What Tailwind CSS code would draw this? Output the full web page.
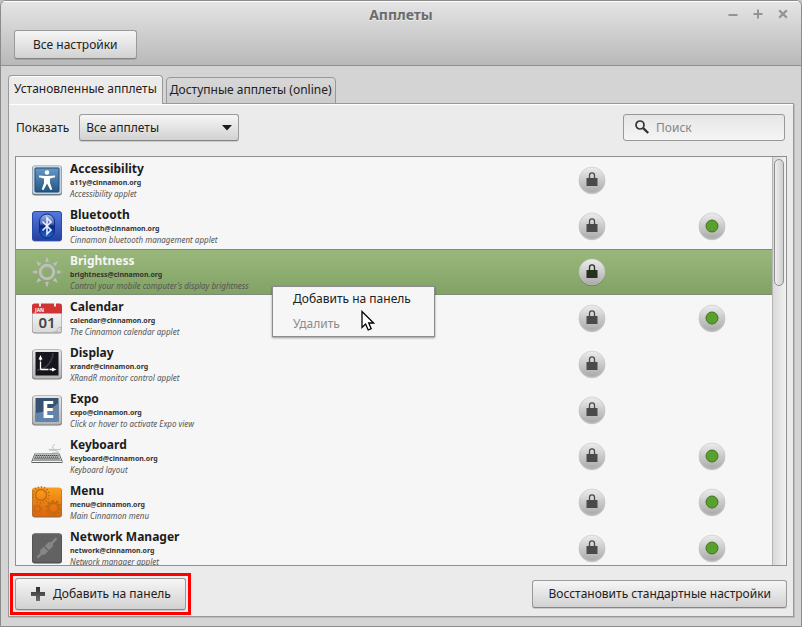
<!DOCTYPE html>
<html lang="ru">
<head>
<meta charset="utf-8">
<meta name="viewport" content="width=device-width, initial-scale=1">
<title>Апплеты</title>
<script src="https://cdn.jsdelivr.net/npm/@tailwindcss/browser@4"></script>
</head>
<body class="bg-[#c3c3c3] font-['Noto_Sans',sans-serif] text-[12px] leading-4 text-[#212121]">

<svg width="0" height="0" class="absolute" aria-hidden="true">
  <defs>
    <linearGradient id="metal" x1="0" y1="0" x2="0" y2="1"><stop offset="0" stop-color="#ededed"/><stop offset="1" stop-color="#a9a9a9"/></linearGradient>
    <linearGradient id="frame" x1="0" y1="0" x2="0" y2="1"><stop offset="0" stop-color="#e6e6e6"/><stop offset="1" stop-color="#b4b4b4"/></linearGradient>
    <linearGradient id="blue" x1="0" y1="0" x2="0" y2="1"><stop offset="0" stop-color="#6798c4"/><stop offset="1" stop-color="#255583"/></linearGradient>
    <linearGradient id="bt" x1="0" y1="0" x2="0" y2="1"><stop offset="0" stop-color="#5379e0"/><stop offset="1" stop-color="#2340a0"/></linearGradient>
    <linearGradient id="btOval" x1="0" y1="0" x2="0" y2="1"><stop offset="0" stop-color="#a5b6e6"/><stop offset=".4" stop-color="#4e6cbf"/><stop offset=".5" stop-color="#0b267f"/><stop offset="1" stop-color="#1c6fd8"/></linearGradient>
    <linearGradient id="orange" x1="0" y1="0" x2="0" y2="1"><stop offset="0" stop-color="#faa01c"/><stop offset="1" stop-color="#e0620e"/></linearGradient>
    <linearGradient id="plusFill" x1="0" y1="0" x2="0" y2="1"><stop offset="0" stop-color="#2e2e2e"/><stop offset="1" stop-color="#6f6f6f"/></linearGradient>
    <linearGradient id="paper" x1="0" y1="0" x2="0" y2="1"><stop offset="0" stop-color="#ffffff"/><stop offset="1" stop-color="#d9d9d9"/></linearGradient>
  </defs>
  <symbol id="disc" viewBox="0 0 28 29">
    <circle cx="14" cy="15" r="13.2" fill="#000" opacity=".2"/>
    <circle cx="14" cy="14" r="13" fill="url(#metal)" stroke="#c4c4c4" stroke-width=".6"/>
  </symbol>
  <symbol id="lock" viewBox="0 0 28 29">
    <use href="#disc"/>
    <path d="M11.500 13V9.300a2.500 2.500 0 0 1 5 0V13" fill="none" stroke="currentColor" stroke-width="1.300"/>
    <path d="M8.500 12h11v8h-11z" fill="currentColor"/>
  </symbol>
  <symbol id="active" viewBox="0 0 28 29">
    <use href="#disc"/>
    <circle cx="14" cy="14" r="6" fill="#5aa02c" stroke="#417420" stroke-width="1"/>
  </symbol>
</svg>

<div class="relative flex h-screen flex-col overflow-hidden rounded-t-[6px] border border-[#8b8b8b] bg-[#d4d4d4]">

  <header class="border-b border-[#8f8f8f] bg-linear-to-b from-[#e5e5e5] to-[#b9b9b9] shadow-[inset_0_1px_0_#fff]">
    <div class="grid h-[29px] grid-cols-[1fr_auto_1fr] items-center">
      <h1 class="col-start-2 pb-[2px] text-[14px] font-bold text-[#6c6c6c] [text-shadow:0_1px_0_#eee]">Апплеты</h1>
      <div class="flex justify-end gap-2 pr-[10px] pb-1 text-[#949494]">
        <button aria-label="Свернуть" class="flex h-[17px] w-[17px] items-center justify-center"><svg width="10" height="10" viewBox="0 0 10 10" stroke="currentColor" stroke-width="2"><path d="M.5 6h9"/></svg></button>
        <button aria-label="Развернуть" class="flex h-[17px] w-[17px] items-center justify-center"><svg width="10" height="10" viewBox="0 0 10 10" stroke="currentColor" stroke-width="2"><path d="M.5 5h9M5 .5v9"/></svg></button>
        <button aria-label="Закрыть" class="flex h-[17px] w-[17px] items-center justify-center"><svg width="10" height="10" viewBox="0 0 10 10" stroke="currentColor" stroke-width="2.300"><path d="M1.200 1.200l7.600 7.600M8.800 1.200l-7.600 7.600"/></svg></button>
      </div>
    </div>
    <div class="px-[13px] pb-[6px]">
      <button class="h-[29px] rounded-[3px] border border-[#9a9a9a] border-b-[#858585] bg-linear-to-b from-[#f6f6f6] to-[#d2d2d2] px-[18px] shadow-[0_1px_0_#0002]">Все настройки</button>
    </div>
  </header>

  <main class="flex min-h-0 flex-1 flex-col pt-[9px] pr-[7px] pb-[9px] pl-[7px]">
    <div role="tablist" class="relative z-10 -mb-px flex items-end gap-[3px]">
      <button role="tab" aria-selected="true" class="h-[29px] rounded-t-[4px] border border-b-0 border-[#999] bg-[#ebebeb] px-[5px] pb-[2px] shadow-[inset_0_1px_0_#fff]">Установленные апплеты</button>
      <button role="tab" aria-selected="false" class="h-[27px] rounded-t-[4px] border border-[#999] bg-linear-to-b from-[#d8d8d8] to-[#cbcbcb] px-[3px] pb-[2px]">Доступные апплеты (online)</button>
    </div>

    <section role="tabpanel" aria-label="Установленные апплеты" class="flex min-h-0 flex-1 flex-col border border-[#999] bg-[#ebebeb] px-[6px] pt-[10px] pb-[6px] shadow-[inset_0_1px_0_#fff,1px_1px_0_#bbb]">
      <div class="flex items-center pr-[2px] pl-px">
        <label for="filter" class="mr-[10px]">Показать</label>
        <div class="relative">
          <select id="filter" class="block h-[27px] w-[160px] appearance-none rounded-[3px] border border-[#9a9a9a] border-b-[#858585] bg-linear-to-b from-[#f6f6f6] to-[#d2d2d2] px-[6px] shadow-[0_1px_0_#0002]">
            <option>Все апплеты</option>
          </select>
          <svg class="pointer-events-none absolute top-[11px] right-[7px]" width="10" height="6" viewBox="0 0 10 6"><path d="M0 0h10L5 5.500z" fill="#1c1c1c"/></svg>
        </div>
        <div class="relative ml-auto">
          <svg class="pointer-events-none absolute top-[6px] left-[12px]" width="15" height="15" viewBox="0 0 15 15" fill="none" stroke="#333"><circle cx="5" cy="5" r="4" stroke-width="1.700"/><path d="M8.200 8.200l5 4.800" stroke-width="2.300"/></svg>
          <input type="search" aria-label="Поиск" placeholder="Поиск" class="block h-[27px] w-[162px] rounded-[3px] border border-[#979797] bg-linear-to-b from-[#e6e6e6] to-[#f5f5f5] pr-2 pl-[32px] placeholder:text-[#858585]">
        </div>
      </div>

      <div class="mt-[15px] flex min-h-0 flex-1 border border-[#8f8f8f] bg-[#f6f6f6]">
        <div class="min-w-0 flex-1 overflow-hidden">
          <table class="w-full table-fixed border-collapse">
            <colgroup><col><col class="w-[120px]"><col class="w-[120px]"></colgroup>
            <tbody>
              <tr class="h-[46px] text-[#4a4a4a]">
                <td class="p-0"><div class="flex items-center gap-[7px] pl-[15px]">
                  <svg class="shrink-0" width="32" height="32" viewBox="0 0 32 32"><rect x="1" y="1.500" width="30" height="30" rx="3" fill="#6e7c88"/><rect x="1.500" y="1.500" width="29" height="28.500" rx="2.500" fill="#c6d2dc"/><rect x="4" y="4" width="24" height="24" rx="1" fill="url(#blue)" stroke="#1d4b7a"/><circle cx="16" cy="8.500" r="2.300" fill="#fff"/><path d="M8 11.500l6 .5h4l6-.5v1.800l-5 1.300v4.400l2.300 6.500-1.900.4L16 19.500l-3.400 6.400-1.900-.4L13 19v-4.400l-5-1.300z" fill="#fff"/></svg>
                  <div><div class="font-bold text-[#1c1c1c]">Accessibility</div><div class="text-[7px] leading-3 font-bold text-[#333]">a11y@cinnamon.org</div><div class="text-[8px] leading-[10px] text-[#555] italic">Accessibility applet</div></div>
                </div></td>
                <td class="p-0"><svg class="mx-auto block" width="28" height="29"><use href="#lock"/></svg></td><td></td>
              </tr>
              <tr class="h-[46px] text-[#4a4a4a]">
                <td class="p-0"><div class="flex items-center gap-[7px] pl-[15px]">
                  <svg class="shrink-0" width="32" height="32" viewBox="0 0 32 32"><rect x="1" y="2" width="30" height="29.500" rx="3" fill="#777"/><rect x="1.500" y="1.500" width="29" height="29" rx="2.500" fill="url(#bt)" stroke="#2b4aa8"/><rect x="8.500" y="4" width="15" height="24" rx="7.500" fill="url(#btOval)" stroke="#10277c"/><path d="M11.500 11.500l8.500 8.500-4 4v-16l4 4-8.500 8.500" fill="none" stroke="#e8eefc" stroke-width="1.600"/></svg>
                  <div><div class="font-bold text-[#1c1c1c]">Bluetooth</div><div class="text-[7px] leading-3 font-bold text-[#333]">bluetooth@cinnamon.org</div><div class="text-[8px] leading-[10px] text-[#555] italic">Cinnamon bluetooth management applet</div></div>
                </div></td>
                <td class="p-0"><svg class="mx-auto block" width="28" height="29"><use href="#lock"/></svg></td><td class="p-0"><svg class="mx-auto block" width="28" height="29"><use href="#active"/></svg></td>
              </tr>
              <tr aria-selected="true" class="h-[46px] bg-linear-to-b from-[#9ab87c] to-[#82a164] text-[#27301e] shadow-[inset_0_1px_0_#7f8c78,inset_0_-1px_0_#7f8c78]">
                <td class="p-0"><div class="flex items-center gap-[7px] pl-[15px]">
                  <svg class="shrink-0" width="32" height="32" viewBox="0 0 32 32" fill="#bebebe"><circle cx="16" cy="16" r="6.800" fill="none" stroke="#bebebe" stroke-width="3"/><g id="rays"><path id="ray" d="M14 6l2-5.500L18 6z"/><use href="#ray" transform="rotate(45 16 16)"/><use href="#ray" transform="rotate(90 16 16)"/><use href="#ray" transform="rotate(135 16 16)"/></g><use href="#rays" transform="rotate(180 16 16)"/></svg>
                  <div><div class="font-bold text-[#f5f5f5]">Brightness</div><div class="text-[7px] leading-3 font-bold text-[#333]">brightness@cinnamon.org</div><div class="text-[8px] leading-[10px] text-[#555] italic">Control your mobile computer's display brightness</div></div>
                </div></td>
                <td class="p-0"><svg class="mx-auto block" width="28" height="29"><use href="#lock"/></svg></td><td></td>
              </tr>
              <tr class="h-[46px] text-[#4a4a4a]">
                <td class="p-0"><div class="flex items-center gap-[7px] pl-[15px]">
                  <svg class="shrink-0" width="32" height="32" viewBox="0 0 32 32"><rect x="1" y="2" width="30" height="29.500" rx="3" fill="#8b8b8b"/><rect x="1.500" y="2" width="29" height="28.500" rx="2.500" fill="url(#paper)"/><path d="M1 11.500V4a2.500 2.500 0 0 1 2.500-2.500h25A2.500 2.500 0 0 1 31 4v7.500z" fill="#d13434"/><path d="M9 1v3.500M24 1v3.500" stroke="#eee" stroke-width="2"/><path d="M30 25c-.5 3.500-3 5-8 5.500 4-1 5-3 5-4.500z" stroke="#aaa" stroke-width=".8" fill="#eee"/><text x="4" y="10" font-size="5" font-weight="700" fill="#fff">JAN</text><text x="16" y="26" text-anchor="middle" font-size="15" font-weight="600" fill="#444">01</text></svg>
                  <div><div class="font-bold text-[#1c1c1c]">Calendar</div><div class="text-[7px] leading-3 font-bold text-[#333]">calendar@cinnamon.org</div><div class="text-[8px] leading-[10px] text-[#555] italic">The Cinnamon calendar applet</div></div>
                </div></td>
                <td class="p-0"><svg class="mx-auto block" width="28" height="29"><use href="#lock"/></svg></td><td class="p-0"><svg class="mx-auto block" width="28" height="29"><use href="#active"/></svg></td>
              </tr>
              <tr class="h-[46px] text-[#4a4a4a]">
                <td class="p-0"><div class="flex items-center gap-[7px] pl-[15px]">
                  <svg class="shrink-0" width="32" height="32" viewBox="0 0 32 32"><rect x="1" y="2" width="30" height="29.500" rx="3" fill="#777"/><rect x="1.500" y="1.500" width="29" height="29" rx="3" fill="url(#frame)" stroke="#999" stroke-width=".6"/><rect x="4.500" y="4" width="23" height="23.500" fill="#16141c"/><path d="M6 22c7 0 15-6 16-17" fill="none" stroke="#3a3744" stroke-width="2"/><path d="M9.500 21.500V10.500M9.500 21.500H23" stroke="#fff" stroke-width="1.300" stroke-dasharray="8 1"/><path d="M7.500 11.500l2-4.500 2 4.500zM21 19.500l4.500 2-4.500 2z" fill="#fff"/></svg>
                  <div><div class="font-bold text-[#1c1c1c]">Display</div><div class="text-[7px] leading-3 font-bold text-[#333]">xrandr@cinnamon.org</div><div class="text-[8px] leading-[10px] text-[#555] italic">XRandR monitor control applet</div></div>
                </div></td>
                <td class="p-0"><svg class="mx-auto block" width="28" height="29"><use href="#lock"/></svg></td><td></td>
              </tr>
              <tr class="h-[46px] text-[#4a4a4a]">
                <td class="p-0"><div class="flex items-center gap-[7px] pl-[15px]">
                  <svg class="shrink-0" width="32" height="32" viewBox="0 0 32 32"><rect x="1" y="2" width="30" height="29.500" rx="3" fill="#777"/><rect x="1.500" y="1.500" width="29" height="29" rx="3" fill="url(#frame)" stroke="#999" stroke-width=".6"/><rect x="4.500" y="4" width="23" height="23.500" fill="#37516f"/><path d="M4.500 19c8-1 17-3 23-11v19.500h-23z" fill="#5f84ab"/><text x="17" y="24" text-anchor="middle" font-size="23" font-weight="700" fill="#fff">E</text></svg>
                  <div><div class="font-bold text-[#1c1c1c]">Expo</div><div class="text-[7px] leading-3 font-bold text-[#333]">expo@cinnamon.org</div><div class="text-[8px] leading-[10px] text-[#555] italic">Click or hover to activate Expo view</div></div>
                </div></td>
                <td class="p-0"><svg class="mx-auto block" width="28" height="29"><use href="#lock"/></svg></td><td></td>
              </tr>
              <tr class="h-[46px] text-[#4a4a4a]">
                <td class="p-0"><div class="flex items-center gap-[7px] pl-[15px]">
                  <svg class="shrink-0" width="32" height="32" viewBox="0 0 32 32"><path d="M30 8.500c-2 2.500-7 0-12 1-1.500 1.500 9 0 9.500 2.500 0 1.500-6 0-7 2M23 8.500c-3-1.500-1-3 1-4" fill="none" stroke="#bdbdbd"/><path d="M3.500 13.500h25l3 7.500v2H.5v-2z" fill="#5e6263"/><path d="M4 14.200h24l2.300 6.300H1.700z" fill="#ddd"/><path d="M4.500 15.500h23M3.800 17.100h24.400M3.200 18.800h25.600" stroke="#444" stroke-width="1.200" stroke-dasharray="1.500 .5"/><path d="M1 21.500h30" stroke="#f4f4f4"/></svg>
                  <div><div class="font-bold text-[#1c1c1c]">Keyboard</div><div class="text-[7px] leading-3 font-bold text-[#333]">keyboard@cinnamon.org</div><div class="text-[8px] leading-[10px] text-[#555] italic">Keyboard layout</div></div>
                </div></td>
                <td class="p-0"><svg class="mx-auto block" width="28" height="29"><use href="#lock"/></svg></td><td class="p-0"><svg class="mx-auto block" width="28" height="29"><use href="#active"/></svg></td>
              </tr>
              <tr class="h-[46px] text-[#4a4a4a]">
                <td class="p-0"><div class="flex items-center gap-[7px] pl-[15px]">
                  <svg class="shrink-0" width="32" height="32" viewBox="0 0 32 32"><rect x="1" y="2" width="30" height="29.500" rx="3" fill="#8a6a50"/><rect x="1.500" y="1.500" width="29" height="29" rx="2.500" fill="url(#orange)"/><g fill="none" stroke="#c46c10"><circle cx="10" cy="9" r="5.500" stroke-width="1.500"/><circle cx="10" cy="9" r="8" stroke-width="1.600" stroke-dasharray="1.500 1.600"/><circle cx="22.500" cy="22" r="5" stroke-width="2.400"/><circle cx="22.500" cy="22" r="7" stroke-width="2.200" stroke-dasharray="2.400 2"/><circle cx="6.500" cy="23" r="2.800" stroke-width="1.500"/><circle cx="6.500" cy="23" r="4.500" stroke-width="1.500" stroke-dasharray="1.400 1.400"/></g></svg>
                  <div><div class="font-bold text-[#1c1c1c]">Menu</div><div class="text-[7px] leading-3 font-bold text-[#333]">menu@cinnamon.org</div><div class="text-[8px] leading-[10px] text-[#555] italic">Main Cinnamon menu</div></div>
                </div></td>
                <td class="p-0"><svg class="mx-auto block" width="28" height="29"><use href="#lock"/></svg></td><td class="p-0"><svg class="mx-auto block" width="28" height="29"><use href="#active"/></svg></td>
              </tr>
              <tr class="h-[46px] text-[#4a4a4a]">
                <td class="p-0"><div class="flex items-center gap-[7px] pl-[15px]">
                  <svg class="shrink-0" width="32" height="32" viewBox="0 0 32 32"><rect x="1" y="1.500" width="30" height="30" rx="3" fill="#444"/><rect x="1.500" y="1.500" width="29" height="29" rx="2.500" fill="#626262"/><g transform="rotate(-45 16 16)" fill="#868686"><path d="M2.500 14.800h5l2-2h5v6.400h-5l-2-2h-5zM15.800 13h5.400l2 1.800h6.300v2.400h-6.300l-2 1.800h-5.400z"/></g></svg>
                  <div><div class="font-bold text-[#1c1c1c]">Network Manager</div><div class="text-[7px] leading-3 font-bold text-[#333]">network@cinnamon.org</div><div class="text-[8px] leading-[10px] text-[#555] italic">Network manager applet</div></div>
                </div></td>
                <td class="p-0"><svg class="mx-auto block" width="28" height="29"><use href="#lock"/></svg></td><td class="p-0"><svg class="mx-auto block" width="28" height="29"><use href="#active"/></svg></td>
              </tr>
            </tbody>
          </table>
        </div>
        <div class="w-[14px] shrink-0 border-l border-[#b5b5b5] bg-linear-to-r from-[#d9d9d9] to-[#f2f2f2] px-px pt-[2px]">
          <div class="h-[127px] w-[10px] rounded-full border border-[#8f8f8f] bg-linear-to-r from-[#eee] to-[#cfcfcf]"></div>
        </div>
      </div>

      <div class="mt-3 flex items-center justify-between">
        <div class="relative">
          <button class="flex h-[32px] items-center gap-2 rounded-[3px] border border-[#9a9a9a] border-b-[#858585] bg-linear-to-b from-[#f6f6f6] to-[#d2d2d2] pr-[14px] pl-[15px] shadow-[0_1px_0_#0002]">
            <svg width="14" height="14" viewBox="0 0 14 14"><path d="M5 0h4v5h5v4H9v5H5V9H0V5h5z" fill="url(#plusFill)"/></svg>
            Добавить на панель
          </button>
          <div class="pointer-events-none absolute -inset-x-[5px] -inset-y-[5px] border-[3px] border-[#f00]"></div>
        </div>
        <button class="h-[28px] rounded-[3px] border border-[#9a9a9a] border-b-[#858585] bg-linear-to-b from-[#f6f6f6] to-[#d2d2d2] px-[15px] shadow-[0_1px_0_#0002]">Восстановить стандартные настройки</button>
      </div>
    </section>
  </main>

  <div role="menu" class="absolute top-[285px] left-[271px] z-20 flex w-[163px] flex-col border border-[#8c8c8c] bg-[#f6f6f6] shadow-[0_1px_2px_#0006]">
    <button role="menuitem" class="h-6 px-5 text-left">Добавить на панель</button>
    <button role="menuitem" disabled class="h-[25px] px-5 text-left text-[#8c8c8c]">Удалить</button>
  </div>
  <svg class="pointer-events-none absolute top-[309px] left-[359px] z-30" width="15" height="22" viewBox="0 0 15 22"><path d="M2 1.500v16l3.600-3.400 2.600 5.900 3-1.300-2.500-5.700h4.900z" fill="#fff" stroke="#000" stroke-width="1.300"/></svg>
</div>
</body>
</html>
